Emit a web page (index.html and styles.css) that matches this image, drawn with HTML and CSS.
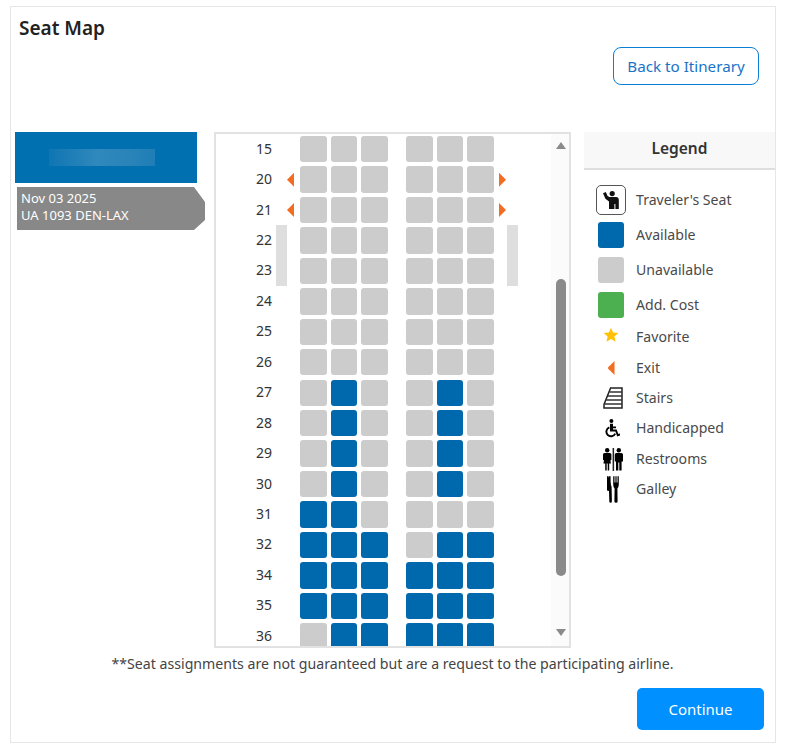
FILE: index.html
```html
<!DOCTYPE html>
<html lang="en">
<head>
<meta charset="utf-8">
<title>Seat Map</title>
<link rel="stylesheet" href="styles.css">
</head>
<body>
<div class="card">
  <h1 class="title">Seat Map</h1>
  <div class="top-actions"><a class="btn-outline">Back to Itinerary</a></div>
  <div class="content">
    <div class="side">
      <div class="flight-head"><div class="redacted"></div></div>
      <div class="flight-tag">Nov 03 2025<br>UA 1093 DEN-LAX</div>
    </div>
    <div class="map">
      <div class="rows">
        <div class="row"><span class="num">15</span><span class="exit"></span><span class="seats"><i class="s"></i><i class="s"></i><i class="s"></i></span><span class="seats"><i class="s"></i><i class="s"></i><i class="s"></i></span></div>
        <div class="row"><span class="num">20</span><span class="exit"><b class="arrow-l"></b></span><span class="seats"><i class="s"></i><i class="s"></i><i class="s"></i></span><span class="seats"><i class="s"></i><i class="s"></i><i class="s"></i></span><span class="exit-r"><b class="arrow-r"></b></span></div>
        <div class="row"><span class="num">21</span><span class="exit"><b class="arrow-l"></b></span><span class="seats"><i class="s"></i><i class="s"></i><i class="s"></i></span><span class="seats"><i class="s"></i><i class="s"></i><i class="s"></i></span><span class="exit-r"><b class="arrow-r"></b></span></div>
        <div class="row"><span class="num">22</span><span class="exit"></span><span class="seats"><i class="s"></i><i class="s"></i><i class="s"></i></span><span class="seats"><i class="s"></i><i class="s"></i><i class="s"></i></span></div>
        <div class="row"><span class="num">23</span><span class="exit"></span><span class="seats"><i class="s"></i><i class="s"></i><i class="s"></i></span><span class="seats"><i class="s"></i><i class="s"></i><i class="s"></i></span></div>
        <div class="row"><span class="num">24</span><span class="exit"></span><span class="seats"><i class="s"></i><i class="s"></i><i class="s"></i></span><span class="seats"><i class="s"></i><i class="s"></i><i class="s"></i></span></div>
        <div class="row"><span class="num">25</span><span class="exit"></span><span class="seats"><i class="s"></i><i class="s"></i><i class="s"></i></span><span class="seats"><i class="s"></i><i class="s"></i><i class="s"></i></span></div>
        <div class="row"><span class="num">26</span><span class="exit"></span><span class="seats"><i class="s"></i><i class="s"></i><i class="s"></i></span><span class="seats"><i class="s"></i><i class="s"></i><i class="s"></i></span></div>
        <div class="row"><span class="num">27</span><span class="exit"></span><span class="seats"><i class="s"></i><i class="s a"></i><i class="s"></i></span><span class="seats"><i class="s"></i><i class="s a"></i><i class="s"></i></span></div>
        <div class="row"><span class="num">28</span><span class="exit"></span><span class="seats"><i class="s"></i><i class="s a"></i><i class="s"></i></span><span class="seats"><i class="s"></i><i class="s a"></i><i class="s"></i></span></div>
        <div class="row"><span class="num">29</span><span class="exit"></span><span class="seats"><i class="s"></i><i class="s a"></i><i class="s"></i></span><span class="seats"><i class="s"></i><i class="s a"></i><i class="s"></i></span></div>
        <div class="row"><span class="num">30</span><span class="exit"></span><span class="seats"><i class="s"></i><i class="s a"></i><i class="s"></i></span><span class="seats"><i class="s"></i><i class="s a"></i><i class="s"></i></span></div>
        <div class="row"><span class="num">31</span><span class="exit"></span><span class="seats"><i class="s a"></i><i class="s a"></i><i class="s"></i></span><span class="seats"><i class="s"></i><i class="s"></i><i class="s"></i></span></div>
        <div class="row"><span class="num">32</span><span class="exit"></span><span class="seats"><i class="s a"></i><i class="s a"></i><i class="s a"></i></span><span class="seats"><i class="s"></i><i class="s a"></i><i class="s a"></i></span></div>
        <div class="row"><span class="num">34</span><span class="exit"></span><span class="seats"><i class="s a"></i><i class="s a"></i><i class="s a"></i></span><span class="seats"><i class="s a"></i><i class="s a"></i><i class="s a"></i></span></div>
        <div class="row"><span class="num">35</span><span class="exit"></span><span class="seats"><i class="s a"></i><i class="s a"></i><i class="s a"></i></span><span class="seats"><i class="s a"></i><i class="s a"></i><i class="s a"></i></span></div>
        <div class="row"><span class="num">36</span><span class="exit"></span><span class="seats"><i class="s"></i><i class="s a"></i><i class="s a"></i></span><span class="seats"><i class="s a"></i><i class="s a"></i><i class="s a"></i></span></div>
      </div>
      <div class="wing wing-l"></div>
      <div class="wing wing-r"></div>
      <div class="scrollbar">
        <div class="sb-up"></div>
        <div class="sb-thumb"></div>
        <div class="sb-down"></div>
      </div>
    </div>
    <div class="legend">
      <div class="legend-head">Legend</div>
      <ul class="legend-list">
        <li class="item tall"><span class="ico"><span class="traveler">
          <svg width="20" height="20" viewBox="0 0 20 20"><circle cx="11.2" cy="3.6" r="2.6" fill="#111"/><path d="M2 3.2 L4.8 2 L6.6 6 L8.4 7 L15 7 Q17.8 7.2 17.8 10 L17.8 19 L14.4 19 L14.4 14 L13.4 14 L13.4 19 L8 19 L8 11.4 L4.4 8.8 Z" fill="#111"/></svg>
        </span></span><span class="lbl">Traveler's Seat</span></li>
        <li class="item tall"><span class="ico"><i class="sw sw-blue"></i></span><span class="lbl">Available</span></li>
        <li class="item tall"><span class="ico"><i class="sw sw-gray"></i></span><span class="lbl">Unavailable</span></li>
        <li class="item tall"><span class="ico"><i class="sw sw-green"></i></span><span class="lbl">Add. Cost</span></li>
        <li class="item"><span class="ico ico-up">
          <svg width="16" height="16" viewBox="0 0 16 16"><path d="M8 .8 L10.1 5.6 L15.3 6.1 L11.4 9.6 L12.5 14.8 L8 12.1 L3.5 14.8 L4.6 9.6 L.7 6.1 L5.9 5.6 Z" fill="#ffc107"/></svg>
        </span><span class="lbl">Favorite</span></li>
        <li class="item"><span class="ico"><b class="arrow-l"></b></span><span class="lbl">Exit</span></li>
        <li class="item"><span class="ico nudge">
          <svg width="20" height="22" viewBox="0 0 20 22"><path d="M7.6 1 H19 V21 H1 V17.5 Z" fill="#fff" stroke="#222" stroke-width="1.5"/><path d="M6.6 5 H19 M4.9 9 H19 M3.2 13 H19 M1.6 17 H19" stroke="#333" stroke-width="1.5" fill="none"/></svg>
        </span><span class="lbl">Stairs</span></li>
        <li class="item"><span class="ico nudge">
          <svg width="15" height="19" viewBox="0 0 15 19"><circle cx="6.4" cy="2" r="2" fill="#000"/><path d="M5 4.8 H8 V7.4 H11 V9.2 H8 V10.4 H11.6 L13.4 15 L15 14.6 L15 16.6 L12.2 17.4 L10.4 12.6 H5 Z" fill="#000"/><path d="M4.4 8.4 A4.6 4.6 0 1 0 10.2 14.6" fill="none" stroke="#000" stroke-width="1.9"/></svg>
        </span><span class="lbl">Handicapped</span></li>
        <li class="item"><span class="ico nudge">
          <svg width="20" height="23" viewBox="0 0 20 23"><circle cx="4.2" cy="2.3" r="2.2" fill="#000"/><path d="M1.6 5 H6.8 Q8.4 5 8.4 6.6 V11.8 L7.4 12.6 L8 15.4 H6.2 V22.5 H4.7 V15.4 H3.7 V22.5 H2.2 V15.4 H.4 L1 12.6 L0 11.8 V6.6 Q0 5 1.6 5 Z" fill="#000"/><rect x="9.6" y="0" width="1.5" height="23" fill="#222"/><circle cx="15.8" cy="2.3" r="2.2" fill="#000"/><path d="M13.4 5 H18.2 Q20 5 20 6.6 V13.4 H18.6 V22.5 H16.3 V14.5 H15.3 V22.5 H13 V13.4 H11.8 V6.6 Q11.8 5 13.4 5 Z" fill="#000"/></svg>
        </span><span class="lbl">Restrooms</span></li>
        <li class="item"><span class="ico nudge">
          <svg width="12" height="27" viewBox="0 0 12 27"><path d="M0 .3 H1.5 L4.6 11 L4.9 25.6 Q4.9 26.8 3.6 26.8 Q2.3 26.8 2.3 25.6 L2 15 L0 14.4 Z" fill="#000"/><path d="M2 .3 H3.6 V8 H2 Z" fill="#000"/><path d="M6.2 .3 H7.5 V6.5 H8.4 V.3 H9.6 V6.5 H10.5 V.3 H11.8 V8.4 Q11.8 11 10.4 12.4 L10.6 25.6 Q10.6 26.8 9 26.8 Q7.4 26.8 7.4 25.6 L7.6 12.4 Q6.2 11 6.2 8.4 Z" fill="#000"/></svg>
        </span><span class="lbl">Galley</span></li>
      </ul>
    </div>
  </div>
  <p class="note">**Seat assignments are not guaranteed but are a request to the participating airline.</p>
  <div class="bottom-actions"><a class="btn-primary">Continue</a></div>
</div>
</body>
</html>
```
FILE: styles.css
```css
* { box-sizing: border-box; }
html, body { margin: 0; padding: 0; background: #fff; }
body { font-family: "Noto Sans", "Open Sans", sans-serif; color: #333; padding: 6px 0 0 10px; }

.card {
  width: 766px;
  height: 737px;
  border: 1px solid #e6e6e6;
  padding: 8px 0 0 4px;
}
.title {
  margin: 0 0 0 4px;
  font-size: 19px;
  line-height: 27px;
  font-weight: 600;
  color: #222;
}
.top-actions {
  display: flex;
  justify-content: flex-end;
  margin-top: 5px;
  padding-right: 16px;
}
.btn-outline {
  display: flex;
  align-items: center;
  justify-content: center;
  width: 146px;
  height: 38px;
  border: 1px solid #0a7fd6;
  border-radius: 8px;
  color: #1a73c8;
  font-size: 15.2px;
  padding-bottom: 1px;
}

.content { display: flex; margin-top: 47px; align-items: flex-start; }

.side { width: 199px; flex: none; }
.flight-head {
  width: 182px;
  height: 51px;
  background: #0070b0;
  display: flex;
  align-items: center;
  justify-content: center;
}
.redacted {
  width: 106px;
  height: 17px;
  margin-right: 8px;
  background: linear-gradient(90deg, #0f76b3, #3088bc 45%, #2a84b9 75%, #1f7eb6);
}
.flight-tag {
  margin: 4px 0 0 2px;
  width: 188px;
  height: 43px;
  background: #888;
  color: #fff;
  font-size: 13px;
  line-height: 16.5px;
  padding: 3px 0 0 4px;
  clip-path: polygon(0 0, 177px 0, 188px 15px, 188px 33px, 177px 43px, 0 43px);
}

.map {
  position: relative;
  width: 357px;
  height: 516px;
  border: 2px solid #e2e2e2;
  overflow: hidden;
  flex: none;
}
.rows {
  display: flex;
  flex-direction: column;
  gap: 4.05px;
  padding-top: 2px;
}
.row { display: flex; align-items: center; height: 26.4px; flex: none; }
.num { width: 56px; text-align: right; font-size: 14px; color: #333; margin-top: -2px; }
.exit { width: 28px; display: flex; justify-content: flex-end; padding-right: 6px; }
.exit-r { display: flex; padding-left: 5.5px; }
.seats { display: flex; gap: 4px; margin-right: 18.5px; }
.seats + .seats { margin-right: 0; }
.s { display: block; width: 26.5px; height: 26.4px; background: #ccc; border-radius: 3px; }
.s.a { background: #0069ad; }

.arrow-l, .arrow-r { display: block; width: 7px; height: 14px; background: #f26c22; }
.arrow-l { clip-path: polygon(100% 0, 100% 100%, 0 50%); }
.arrow-r { clip-path: polygon(0 0, 100% 50%, 0 100%); }

.wing { position: absolute; top: 91px; width: 11px; height: 61px; background: #dedede; }
.wing-l { left: 60px; }
.wing-r { left: 290.5px; }

.scrollbar {
  position: absolute;
  top: 0;
  right: 0;
  width: 18px;
  height: 100%;
  background: #fbfbfb;
}
.sb-up, .sb-down {
  position: absolute;
  left: 5px;
  width: 10px;
  height: 7px;
  background: #8a8a8a;
}
.sb-up { top: 8px; clip-path: polygon(50% 0, 100% 100%, 0 100%); }
.sb-down { bottom: 10px; clip-path: polygon(0 0, 100% 0, 50% 100%); }
.sb-thumb {
  position: absolute;
  top: 145px;
  left: 5px;
  width: 10px;
  height: 297px;
  background: #8a8a8a;
  border-radius: 5px;
}

.legend { width: 191px; margin-left: 13px; flex: none; }
.legend-head {
  height: 38px;
  background: #f8f8f8;
  border-bottom: 2px solid #dedede;
  text-align: center;
  font-size: 15.5px;
  font-weight: 600;
  line-height: 32px;
  color: #333;
}
.legend-list { list-style: none; margin: 0; padding: 12.5px 0 0; }
.item { display: flex; align-items: center; height: 30.4px; }
.item.tall { height: 35px; }
.ico { width: 52px; padding-left: 2px; display: flex; justify-content: center; align-items: center; flex: none; }
.ico-up { margin-top: -5px; }
.nudge { padding-left: 5px; }
.lbl { font-size: 14.1px; color: #4a4a4a; margin-top: -2px; }
.sw { display: block; width: 26px; height: 26px; border-radius: 3px; }
.sw-blue { background: #0069ad; }
.sw-gray { background: #ccc; }
.sw-green { background: #4caf50; }
.traveler {
  display: flex;
  align-items: center;
  justify-content: center;
  width: 30px;
  height: 30px;
  border: 1.5px solid #555;
  border-radius: 5px;
}

.note {
  margin: 6px 0 0;
  width: 755px;
  text-align: center;
  font-size: 14.15px;
  line-height: 20px;
  color: #444;
}
.bottom-actions { display: flex; justify-content: flex-end; margin-top: 14px; padding-right: 11px; }
.btn-primary {
  display: flex;
  align-items: center;
  justify-content: center;
  width: 127px;
  height: 42px;
  background: #0090ff;
  border-radius: 5px;
  color: #fff;
  font-size: 15px;
}
```
